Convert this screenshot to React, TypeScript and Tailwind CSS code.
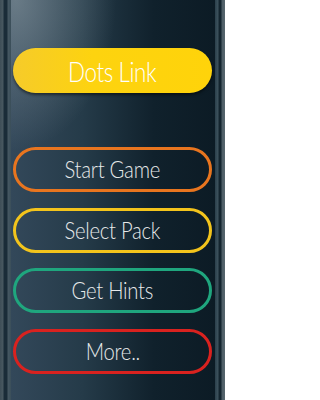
import React from "react";

const font = { fontFamily: "Lato, 'Open Sans', sans-serif" };

function Outline({ label, color }: { label: string; color: string }) {
  return (
    <div
      className={`h-[45px] rounded-full border-[3px] flex items-center justify-center text-[#e6e9ea] ${color}`}
    >
      <span className="inline-block text-[23px] font-light tracking-[-0.3px] scale-x-[0.88] leading-none">
        {label}
      </span>
    </div>
  );
}

export default function App() {
  return (
    <div
      className="w-[225px] h-[400px] flex flex-row overflow-hidden bg-[#0c1c26]"
      style={font}
    >
      <div className="w-[11px] h-full bg-[linear-gradient(to_right,#3e4e57_0px,#485860_3px,#1a2c38_4px,#1a2c38_7px,#465862_8px,#3a4e59_11px)]" />
      <div className="flex-1 h-full flex flex-col pl-[2px] pr-[3px] pt-[48px] bg-[radial-gradient(ellipse_100px_150px_at_5px_0px,rgba(150,165,172,0.55),rgba(150,165,172,0)),linear-gradient(to_right,#33485a_0%,#253b49_35%,#10212c_70%,#0c1b25_100%)]">
        <div className="h-[45px] rounded-full flex items-center justify-center bg-[linear-gradient(to_right,#f6cb2a,#fdd30f_40%,#ffd30a)] shadow-[0_2px_3px_rgba(0,0,0,0.5)] text-white">
          <span className="inline-block text-[28px] font-light tracking-[-0.5px] scale-x-[0.8] leading-none">
            Dots Link
          </span>
        </div>
        <div className="mt-[54px] flex flex-col gap-[15.5px]">
          <Outline label="Start Game" color="border-[#e8751f]" />
          <Outline label="Select Pack" color="border-[#f3c41c]" />
          <Outline label="Get Hints" color="border-[#1fa67e]" />
          <Outline label="More.." color="border-[#d9221f]" />
        </div>
      </div>
      <div className="w-[10px] h-full bg-[linear-gradient(to_right,#2a3f4b_0px,#3d525d_3px,#14252f_4px,#14252f_6px,#4c5c65_7px,#56656d_10px)]" />
    </div>
  );
}
